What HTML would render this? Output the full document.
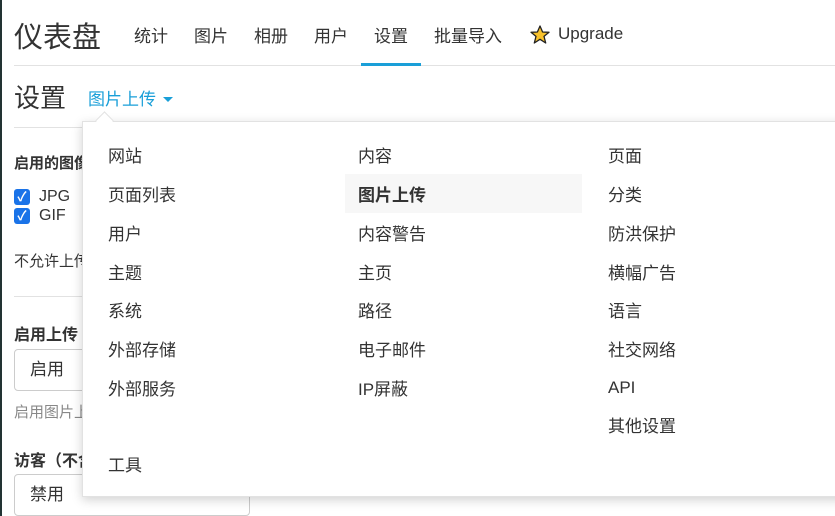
<!DOCTYPE html>
<html><head><meta charset="utf-8"><style>
body{margin:0;width:835px;height:516px;overflow:hidden;background:#fff;font-family:"Liberation Sans","Noto Sans CJK SC",sans-serif;color:#333;position:relative}
.a{position:absolute;white-space:nowrap}
.nav{font-size:17px;top:22px}
.dd{position:absolute;left:82px;top:121px;width:800px;height:374px;background:#fff;border:1px solid #e2e2e2;box-shadow:0 3px 10px rgba(0,0,0,.18)}
.dd .a{font-size:17px;color:#333}
.sel{position:absolute;left:14px;width:234px;height:42px;border:1px solid #ccc;border-radius:4px;font-size:17px;line-height:42px;padding-left:15px;box-sizing:border-box}
.cb{position:absolute;left:14px;width:16px;height:16px;background:#1a73e8;border-radius:3px;color:#fff;font-size:13px;line-height:16px;text-align:center;font-weight:bold}
</style></head><body>
<div class="a" style="left:0;top:0;width:2px;height:516px;background:#233;"></div>
<div class="a" style="left:14px;top:14px;font-size:29px;color:#333">仪表盘</div>
<div class="a nav" style="left:134px">统计</div>
<div class="a nav" style="left:194px">图片</div>
<div class="a nav" style="left:254px">相册</div>
<div class="a nav" style="left:314px">用户</div>
<div class="a nav" style="left:374px">设置</div>
<div class="a nav" style="left:434px">批量导入</div>
<svg class="a" style="left:530px;top:25px" width="20" height="19" viewBox="0 0 20 19"><polygon points="10,1 12.6,7 19,7.3 14,11.4 15.7,18 10,14.3 4.3,18 6,11.4 1,7.3 7.4,7" fill="#f8c22d" stroke="#222" stroke-width="1.3" stroke-linejoin="round"/></svg>
<div class="a nav" style="left:558px;top:24px">Upgrade</div>
<div class="a" style="left:14px;top:65px;width:821px;height:1px;background:#e2e2e2"></div>
<div class="a" style="left:361px;top:63px;width:60px;height:3px;background:#1a9fd8"></div>
<div class="a" style="left:14px;top:78px;font-size:26px">设置</div>
<div class="a" style="left:88px;top:85px;font-size:17px;color:#1a9fd8">图片上传</div>
<div class="a" style="left:163px;top:97px;width:0;height:0;border-left:5px solid transparent;border-right:5px solid transparent;border-top:5px solid #1a9fd8"></div>
<div class="a" style="left:14px;top:127px;width:821px;height:1px;background:#e2e2e2"></div>
<div class="a" style="left:14px;top:152px;font-size:15px;font-weight:bold">启用的图像</div>
<div class="cb" style="top:189px">✓</div><div class="a" style="left:39px;top:188px;font-size:16px">JPG</div>
<div class="cb" style="top:208px">✓</div><div class="a" style="left:39px;top:207px;font-size:16px">GIF</div>
<div class="a" style="left:14px;top:250px;font-size:15px">不允许上传</div>
<div class="a" style="left:14px;top:296px;width:821px;height:1px;background:#e2e2e2"></div>
<div class="a" style="left:14px;top:321px;font-size:16px;font-weight:bold">启用上传</div>
<div class="sel" style="top:349px;line-height:40px">启用</div>
<div class="a" style="left:14px;top:401px;font-size:15px;color:#888">启用图片上传</div>
<div class="a" style="left:14px;top:447px;font-size:16px;font-weight:bold">访客（不含</div>
<div class="sel" style="top:474px;width:236px;line-height:40px">禁用</div>
<div class="dd">
<div class="a" style="left:262px;top:52px;width:237px;height:39px;background:#f7f7f7"></div>
<div class="a" style="left:25px;top:20px">网站</div>
<div class="a" style="left:25px;top:59px">页面列表</div>
<div class="a" style="left:25px;top:98px">用户</div>
<div class="a" style="left:25px;top:137px">主题</div>
<div class="a" style="left:25px;top:175px">系统</div>
<div class="a" style="left:25px;top:214px">外部存储</div>
<div class="a" style="left:25px;top:253px">外部服务</div>
<div class="a" style="left:25px;top:329px">工具</div>
<div class="a" style="left:275px;top:20px">内容</div>
<div class="a" style="left:275px;top:59px;font-weight:bold">图片上传</div>
<div class="a" style="left:275px;top:98px">内容警告</div>
<div class="a" style="left:275px;top:137px">主页</div>
<div class="a" style="left:275px;top:175px">路径</div>
<div class="a" style="left:275px;top:214px">电子邮件</div>
<div class="a" style="left:275px;top:253px">IP屏蔽</div>
<div class="a" style="left:525px;top:20px">页面</div>
<div class="a" style="left:525px;top:59px">分类</div>
<div class="a" style="left:525px;top:98px">防洪保护</div>
<div class="a" style="left:525px;top:137px">横幅广告</div>
<div class="a" style="left:525px;top:175px">语言</div>
<div class="a" style="left:525px;top:214px">社交网络</div>
<div class="a" style="left:525px;top:256px">API</div>
<div class="a" style="left:525px;top:290px">其他设置</div>
</div>
<div class="a" style="left:98px;top:114px;width:12px;height:12px;background:#fff;border-left:1px solid #e2e2e2;border-top:1px solid #e2e2e2;transform:rotate(45deg)"></div>
</body></html>
